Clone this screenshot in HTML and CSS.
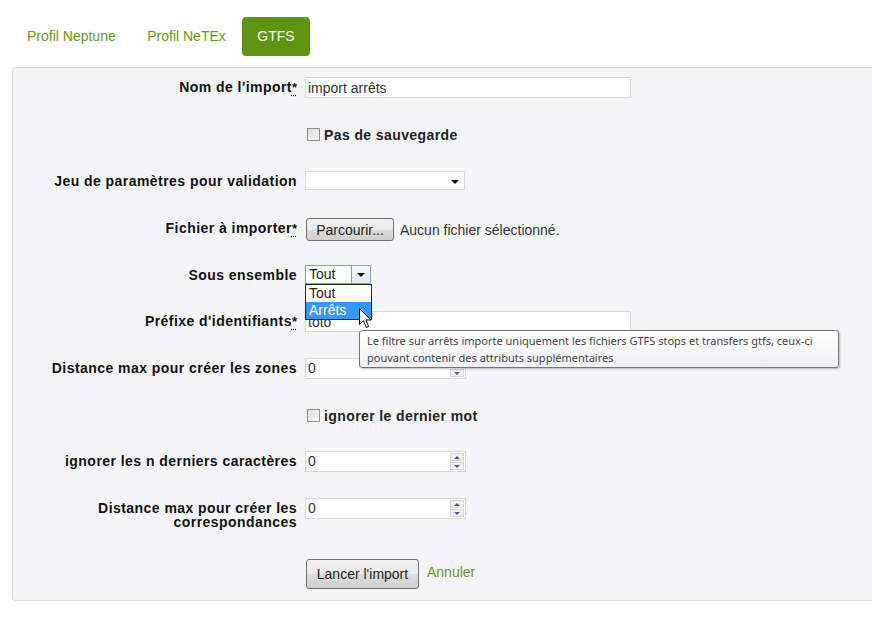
FILE: index.html
```html
<!DOCTYPE html>
<html lang="fr">
<head>
<meta charset="utf-8">
<title>Import</title>
<link rel="stylesheet" href="styles.css">
</head>
<body>
<div class="page">
  <nav class="tabs">
    <a class="tab">Profil Neptune</a>
    <a class="tab">Profil NeTEx</a>
    <a class="tab active">GTFS</a>
  </nav>
  <form class="panel">
    <div class="row">
      <label class="lbl">Nom de l'import<abbr title="requis">*</abbr></label>
      <div class="ctl"><input class="text wide" type="text" value="import arrêts"></div>
    </div>
    <div class="row">
      <span></span>
      <div class="ctl chk"><span class="box"></span><span class="chklbl">Pas de sauvegarde</span></div>
    </div>
    <div class="row">
      <label class="lbl">Jeu de paramètres pour validation</label>
      <div class="ctl"><span class="sel sel-jeu"><span class="caret"></span></span></div>
    </div>
    <div class="row">
      <label class="lbl">Fichier à importer<abbr title="requis">*</abbr></label>
      <div class="ctl file"><button type="button" class="btn btn-file">Parcourir...</button><span class="nofile">Aucun fichier sélectionné.</span></div>
    </div>
    <div class="row short">
      <label class="lbl">Sous ensemble</label>
      <div class="ctl">
        <span class="sel sel-sub"><span class="val">Tout</span><span class="dbtn"><span class="caret"></span></span>
          <span class="dropdown"><span class="opt">Tout</span><span class="opt hl">Arrêts</span></span>
        </span>
      </div>
    </div>
    <div class="row">
      <label class="lbl">Préfixe d'identifiants<abbr title="requis">*</abbr></label>
      <div class="ctl"><input class="text wide" type="text" value="toto"></div>
    </div>
    <div class="row">
      <label class="lbl">Distance max pour créer les zones</label>
      <div class="ctl"><span class="num"><span class="numval">0</span><span class="spin"><span class="up"></span><span class="down"></span></span></span></div>
    </div>
    <div class="row short">
      <span></span>
      <div class="ctl chk"><span class="box"></span><span class="chklbl">ignorer le dernier mot</span></div>
    </div>
    <div class="row">
      <label class="lbl">ignorer les n derniers caractères</label>
      <div class="ctl"><span class="num"><span class="numval">0</span><span class="spin"><span class="up"></span><span class="down"></span></span></span></div>
    </div>
    <div class="row tall">
      <label class="lbl">Distance max pour créer les correspondances</label>
      <div class="ctl"><span class="num"><span class="numval">0</span><span class="spin"><span class="up"></span><span class="down"></span></span></span></div>
    </div>
    <div class="row actions">
      <span></span>
      <div class="ctl"><button type="button" class="btn btn-submit">Lancer l'import</button><a class="cancel">Annuler</a></div>
    </div>
    <div class="tooltip">Le filtre sur arrêts importe uniquement les fichiers GTFS stops et transfers gtfs, ceux-ci<br>pouvant contenir des attributs supplémentaires</div>
    <svg class="cursor" width="13" height="21" viewBox="0 0 13 21"><path d="M0.5 0.5 L0.5 16.5 L4.5 12.8 L7.3 19.5 L9.6 18.5 L6.9 12 L12 12 Z" fill="#fff" stroke="#000" stroke-width="1" stroke-linejoin="miter"/></svg>
  </form>
</div>
</body>
</html>
```
FILE: styles.css
```css
* { box-sizing: border-box; }
html, body { margin: 0; padding: 0; background: #fff; }
body { font-family: "Liberation Sans", Arial, sans-serif; font-size: 14px; color: #111; }
.page { padding: 17px 0 0 12px; }
.tabs { display: flex; gap: 1.5px; margin-bottom: 11px; }
.tab { display: block; height: 39px; line-height: 39px; padding: 0 15px; font-size: 14px; color: #65991c; border-radius: 4px; text-decoration: none; }
.tab.active { background: #5e940f; color: #fff; }
.panel { position: relative; background: #f5f5f7; border: 1px solid #dcdcdf; border-right: none; border-radius: 4px 0 0 4px; padding: 9px 0 11px 0; }
.row { display: grid; grid-template-columns: 284px 1fr; column-gap: 8px; min-height: 47px; align-items: start; }
.row.short { min-height: 46px; }
.row.tall { min-height: 61px; }
.row.actions { min-height: 30px; }
.lbl { font-weight: bold; font-size: 14px; letter-spacing: 0.45px; text-align: right; line-height: 14px; padding-top: 3px; color: #111; }
.lbl abbr { text-decoration: underline dotted; text-underline-offset: 3px; letter-spacing: 0; font-size: 13px; }
.ctl { display: flex; align-items: center; }
.text { height: 21px; border: 1px solid #d8d8d8; background: #fff; font: 14px "Liberation Sans", Arial, sans-serif; color: #333; padding: 0 2px; outline: none; }
.text.wide { width: 326px; }
.chk { height: 21px; padding-left: 2px; }
.box { width: 13px; height: 13px; border: 1px solid #8f8f8f; background: linear-gradient(135deg, #dcdcdc, #fafafa); margin-right: 4px; flex: none; }
.chklbl { font-weight: bold; font-size: 14px; letter-spacing: 0.4px; color: #222; white-space: nowrap; }
.sel { position: relative; display: inline-block; height: 19px; background: #fff; border: 1px solid #dadada; }
.sel-jeu { width: 160px; }
.sel-jeu .caret { position: absolute; right: 5px; top: 8px; }
.caret { display: block; width: 0; height: 0; border-left: 4px solid transparent; border-right: 4px solid transparent; border-top: 4px solid #111; }
.sel-sub { width: 66px; height: 19px; border-color: #7a9fd0; display: flex; }
.sel-sub .val { flex: 1; line-height: 17px; padding-left: 3px; font-size: 14px; color: #222; }
.dbtn { width: 19px; border-left: 1px solid #7a9fd0; background: linear-gradient(#f6f9fd, #e2ebf6); display: flex; align-items: center; justify-content: center; }
.dropdown { position: absolute; left: -1px; top: 18px; width: 67px; background: #fff; border: 1px solid #222; z-index: 3; display: flex; flex-direction: column; padding: 0; }
.opt { height: 17px; line-height: 17px; padding-left: 3px; font-size: 14px; color: #222; }
.opt.hl { background: #3399ff; color: #fff; }
.file { height: 23px; }
.btn { font: 14px "Liberation Sans", Arial, sans-serif; color: #222; border: 1px solid #707070; border-radius: 3px; background: linear-gradient(#f2f2f2 0%, #ebebeb 50%, #dddddd 51%, #cfcfcf 100%); padding: 0; white-space: nowrap; }
.btn-file { width: 88px; height: 23px; margin-left: 1px; }
.nofile { margin-left: 6px; color: #333; font-size: 14px; }
.num { position: relative; display: flex; width: 161px; height: 21px; background: #fff; border: 1px solid #d8d8d8; }
.numval { flex: 1; line-height: 19px; padding-left: 2px; color: #333; font-size: 14px; }
.spin { width: 15px; display: flex; flex-direction: column; padding: 1px 1px 1px 0; gap: 1px; }
.spin span { flex: 1; border: 1px solid #d6d6d6; background: #f0f0f0; display: flex; align-items: center; justify-content: center; }
.spin .up::after { content: ""; border-left: 3px solid transparent; border-right: 3px solid transparent; border-bottom: 3px solid #4a5a9a; }
.spin .down::after { content: ""; border-left: 3px solid transparent; border-right: 3px solid transparent; border-top: 3px solid #4a5a9a; }
.btn-submit { height: 30px; width: 113px; margin-left: 1px; }
.cancel { color: #65991c; font-size: 14px; margin-left: 8px; align-self: flex-start; margin-top: 5px; }
.tooltip { position: absolute; left: 346px; top: 262px; width: 480px; height: 38px; background: linear-gradient(#ffffff, #f0f0f4); border: 1px solid #767676; border-radius: 3px; box-shadow: 1px 1px 2px rgba(0,0,0,0.25); font-family: "Noto Sans", "Open Sans", sans-serif; font-size: 11px; line-height: 17px; color: #444; padding: 1px 7px; z-index: 4; white-space: nowrap; }
.cursor { position: absolute; left: 346px; top: 240px; z-index: 5; }
```
